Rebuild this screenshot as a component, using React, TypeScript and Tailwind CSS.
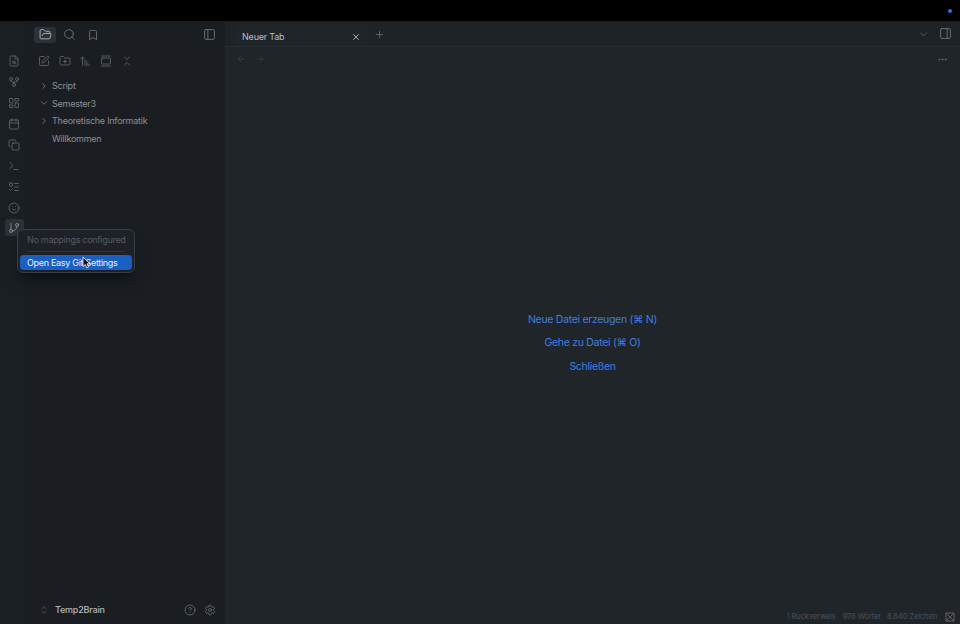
import {
  ArrowLeft,
  ArrowRight,
  ArrowUpNarrowWide,
  Bookmark,
  Calendar,
  ChevronDown,
  ChevronRight,
  ChevronsDownUp,
  ChevronsUpDown,
  CircleHelp,
  Copy,
  Ellipsis,
  FileSearch,
  FolderOpen,
  FolderPlus,
  GalleryVertical,
  GitBranch,
  GitFork,
  LayoutDashboard,
  ListTodo,
  PanelLeft,
  PanelRight,
  Plus,
  Search,
  Settings,
  Smile,
  SquarePen,
  Terminal,
  X,
} from "lucide-react";

const ribbon = [FileSearch, GitFork, LayoutDashboard, Calendar, Copy, Terminal, ListTodo, Smile];

const tree = [
  { label: "Script", icon: ChevronRight },
  { label: "Semester3", icon: ChevronDown },
  { label: "Theoretische Informatik", icon: ChevronRight },
  { label: "Willkommen", icon: null },
];

const navButtons = [SquarePen, FolderPlus, ArrowUpNarrowWide, GalleryVertical, ChevronsDownUp];

function Popup() {
  return (
    <div className="absolute left-[17px] top-[229px] z-10 w-[118px] rounded-md border border-[#3a3f46] bg-[#1e2228] p-[2px] shadow-lg shadow-black/40">
      <div className="mx-[7px] flex h-[20px] items-center border-b border-[#30353b] pb-[3px] text-[9px] tracking-[-0.3px] whitespace-nowrap text-[#555a60]">
        No mappings configured
      </div>
      <div className="mt-[3px] flex h-[15px] items-center rounded-[4px] bg-[#1b5fc1] px-[7px] text-[9px] tracking-[-0.3px] whitespace-nowrap text-[#e8eef8]">
        Open Easy Git Settings
      </div>
      <svg className="absolute left-[64px] top-[26px]" width="9" height="13" viewBox="0 0 9 13">
        <path d="M1 1v9.5l2.3-2 1.5 3.4 1.7-.8-1.5-3.3H8z" fill="#111" stroke="#fff" strokeWidth="0.8" />
      </svg>
    </div>
  );
}

export default function App() {
  return (
    <div className="relative flex h-[624px] w-[960px] flex-col overflow-hidden bg-[#20252a] font-['Inter','Liberation_Sans',sans-serif]">
      <div className="flex h-[22px] shrink-0 justify-end border-b border-[#1a1d21] bg-black pt-[9px] pr-[8px]">
        <div className="h-[4px] w-[4px] rounded-full bg-[#2f6fed]" />
      </div>

      <div className="flex min-h-0 flex-1">
        <aside className="flex w-[30px] shrink-0 flex-col items-center bg-[#1a1f24] pt-[33px] pr-[2px]">
          <div className="flex flex-col gap-[9px] text-[#6b7076]">
            {ribbon.map((Icon, i) => (
              <Icon key={i} className="h-[12px] w-[12px]" strokeWidth={1.5} aria-hidden="true" />
            ))}
          </div>
          <div className="mt-[5px] flex h-[17px] w-[19px] items-center justify-center rounded-[3px] bg-[#2c3138] text-[#9a9ea3]">
            <GitBranch className="h-[12px] w-[12px]" strokeWidth={1.5} aria-hidden="true" />
          </div>
        </aside>

        <aside className="flex w-[195px] shrink-0 flex-col bg-[#1a1e23]">
          <div className="flex h-[25px] items-center pr-[9px] pl-[4px]">
            <div className="flex h-[16px] w-[22px] items-center justify-center rounded-[3px] bg-[#2c3138] text-[#c2c5c9]">
              <FolderOpen className="h-[13px] w-[13px]" strokeWidth={1.5} aria-hidden="true" />
            </div>
            <Search className="ml-[7px] h-[13px] w-[13px] text-[#777c82]" strokeWidth={1.5} aria-hidden="true" />
            <Bookmark className="ml-[11px] h-[12px] w-[12px] text-[#777c82]" strokeWidth={1.5} aria-hidden="true" />
            <PanelLeft className="ml-auto h-[13px] w-[13px] text-[#777c82]" strokeWidth={1.5} aria-hidden="true" />
          </div>

          <div className="flex h-[28px] items-center gap-[8.7px] pl-[8px] text-[#6b7076]">
            {navButtons.map((Icon, i) => (
              <Icon key={i} className="h-[12px] w-[12px]" strokeWidth={1.5} aria-hidden="true" />
            ))}
          </div>

          <div className="flex flex-1 flex-col pt-[2px]">
            {tree.map((item) => (
              <div key={item.label} className="flex h-[17.6px] items-center pl-[9px] text-[9px] tracking-[-0.25px] text-[#8b8f94]">
                <span className="flex w-[13px] items-center text-[#84898e]">
                  {item.icon && <item.icon className="h-[10px] w-[10px]" strokeWidth={1.8} aria-hidden="true" />}
                </span>
                {item.label}
              </div>
            ))}
          </div>

          <div className="flex h-[28px] items-center pr-[9px] pl-[9px]">
            <ChevronsUpDown className="h-[10px] w-[10px] text-[#62676d]" strokeWidth={1.6} aria-hidden="true" />
            <span className="ml-[6px] text-[9px] font-medium tracking-[-0.2px] text-[#b4b7bb]">Temp2Brain</span>
            <CircleHelp className="ml-auto h-[12px] w-[12px] text-[#6f7479]" strokeWidth={1.5} aria-hidden="true" />
            <Settings className="ml-[8px] h-[12px] w-[12px] text-[#6f7479]" strokeWidth={1.5} aria-hidden="true" />
          </div>
        </aside>

        <main className="flex min-w-0 flex-1 flex-col">
          <div className="flex h-[25px] shrink-0 items-end border-b border-[#282d33] bg-[#1e2328] pl-[10px]">
            <div className="flex h-[22px] w-[134px] items-center justify-between rounded-t-md bg-[#20252a] pt-[3px] pr-[8px] pl-[7px]">
              <span className="text-[9px] tracking-[-0.2px] text-[#b9bcc0]">Neuer Tab</span>
              <X className="h-[10px] w-[10px] text-[#c2c5c9]" strokeWidth={2} aria-hidden="true" />
            </div>
            <Plus className="mb-[6px] ml-[5px] h-[11px] w-[11px] text-[#6f7479]" strokeWidth={1.6} aria-hidden="true" />
            <ChevronDown className="mb-[6px] ml-auto h-[11px] w-[11px] text-[#6f7479]" strokeWidth={1.6} aria-hidden="true" />
            <PanelRight className="mr-[8px] mb-[6px] ml-[10px] h-[13px] w-[13px] text-[#777c82]" strokeWidth={1.5} aria-hidden="true" />
          </div>

          <div className="flex h-[24px] shrink-0 items-center pr-[12px] pl-[11px] text-[#3e4349]">
            <ArrowLeft className="h-[10px] w-[10px]" strokeWidth={1.6} aria-hidden="true" />
            <ArrowRight className="ml-[9px] h-[10px] w-[10px]" strokeWidth={1.6} aria-hidden="true" />
            <Ellipsis className="ml-auto h-[11px] w-[11px] text-[#6f7479]" strokeWidth={2} aria-hidden="true" />
          </div>

          <div className="flex flex-1 flex-col items-center justify-center gap-[8.5px] pt-[8px] text-[10.5px] tracking-[-0.3px] text-[#3f7ee0]">
            <div className="leading-[15px]">Neue Datei erzeugen (⌘ N)</div>
            <div className="leading-[15px]">Gehe zu Datei (⌘ O)</div>
            <div className="leading-[15px]">Schließen</div>
          </div>

          <div className="flex h-[18px] shrink-0 items-center justify-end gap-[7px] pt-[3px] pr-[5px] text-[7.5px] tracking-[-0.1px] text-[#4d5258]">
            <span>1 Rückverweis</span>
            <span>978 Wörter</span>
            <span className="-ml-px">8.840 Zeichen</span>
            <svg className="ml-px" width="10" height="10" viewBox="0 0 10 10" fill="none" stroke="#6a5a64" strokeWidth="1">
              <path d="M1 1h8L1 9h8M1 1l8 8M1 1v8M9 1v8" />
            </svg>
          </div>
        </main>
      </div>

      <Popup />
    </div>
  );
}
